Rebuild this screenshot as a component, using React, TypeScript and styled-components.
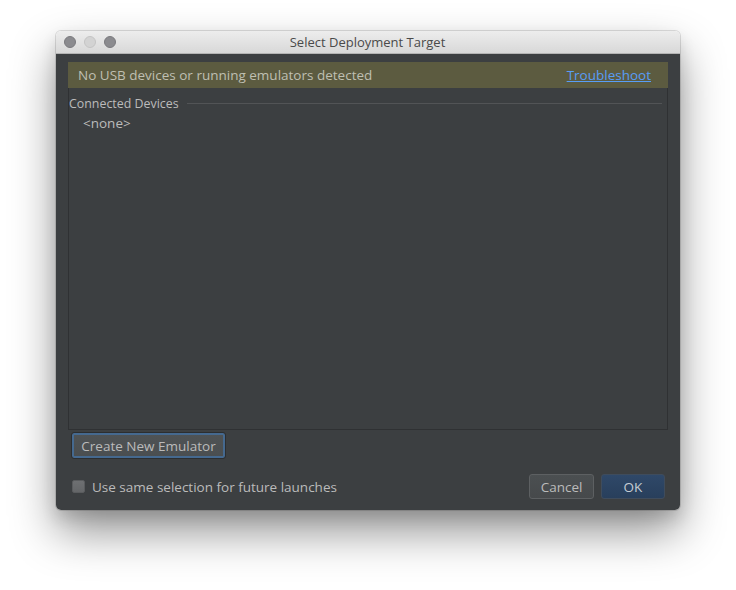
import React from 'react';
import styled, { createGlobalStyle } from 'styled-components';

const GlobalStyle = createGlobalStyle`
  html, body {
    margin: 0;
    padding: 0;
    background: #ffffff;
  }
  body {
    font-family: 'Open Sans', 'Liberation Sans', Arial, sans-serif;
    -webkit-font-smoothing: antialiased;
  }
`;

const Page = styled.div`
  width: 736px;
  height: 590px;
  padding: 31px 0 0 56px;
  box-sizing: border-box;
  overflow: hidden;
`;

const Window = styled.div`
  width: 624px;
  height: 479px;
  display: flex;
  flex-direction: column;
  border-radius: 5px;
  overflow: hidden;
  box-shadow: 0 0 0 1px rgba(0, 0, 0, 0.12), 0 22px 45px rgba(0, 0, 0, 0.42),
    0 8px 16px rgba(0, 0, 0, 0.12);
`;

const TitleBar = styled.div`
  position: relative;
  height: 23px;
  flex: none;
  display: flex;
  align-items: center;
  justify-content: center;
  background: linear-gradient(#ededed, #d8d8d8);
  border-bottom: 1px solid #b4b4b4;
  box-sizing: border-box;
`;

const Lights = styled.div`
  position: absolute;
  left: 8px;
  top: 5px;
  display: flex;
  gap: 8px;
`;

const Light = styled.span<{ $dim?: boolean }>`
  width: 12px;
  height: 12px;
  border-radius: 50%;
  box-sizing: border-box;
  background: ${(p) => (p.$dim ? '#d3d3d3' : '#8b8b8f')};
  border: 1px solid ${(p) => (p.$dim ? '#c4c4c4' : '#7a7a7e')};
`;

const Title = styled.div`
  font-size: 13px;
  color: #4a4a4a;
  margin-left: -1px;
`;

const Body = styled.div`
  flex: 1;
  display: flex;
  flex-direction: column;
  background: #3c3f41;
  padding: 8px 12px 11px 12px;
  color: #bbbbbb;
  font-size: 13.5px;
`;

const Banner = styled.div`
  height: 26px;
  flex: none;
  display: flex;
  align-items: center;
  justify-content: space-between;
  background: #5c5b40;
  padding: 0 17px 0 10px;
`;

const BannerText = styled.span`
  color: #bfbfb2;
`;

const Link = styled.a`
  color: #589df6;
  text-decoration: underline;
  cursor: pointer;
`;

const Panel = styled.div`
  flex: 1;
  border: 1px solid #2f3133;
  border-top: none;
  padding: 7px 5px 0 0;
  display: flex;
  flex-direction: column;
`;

const GroupHeader = styled.div`
  display: flex;
  align-items: center;
  gap: 8px;
  height: 17px;
  font-size: 12.4px;
  &::after {
    content: '';
    flex: 1;
    height: 1px;
    background: #525456;
  }
`;

const Item = styled.div`
  margin: 2px 0 0 14px;
`;

const CreateButton = styled.button`
  align-self: flex-start;
  margin: 2px 0 0 3px;
  height: 27px;
  width: 155px;
  font: inherit;
  color: #bbbbbb;
  background: linear-gradient(#4f5355, #4a4e50);
  border: 1px solid #2c2e30;
  border-radius: 3px;
  box-shadow: 0 0 0 2px #45698f inset;
  padding: 0;
`;

const Footer = styled.div`
  margin-top: 15px;
  display: flex;
  align-items: center;
  justify-content: space-between;
  height: 25px;
`;

const CheckLabel = styled.label`
  display: flex;
  align-items: center;
  gap: 7px;
  padding-left: 4px;
`;

const Box = styled.span`
  width: 13px;
  height: 13px;
  box-sizing: border-box;
  border-radius: 2px;
  background: linear-gradient(#6e7072, #646668);
  border: 1px solid #5a5c5e;
`;

const Buttons = styled.div`
  display: flex;
  gap: 7px;
  padding-right: 3px;
`;

const DialogButton = styled.button<{ $primary?: boolean }>`
  height: 25px;
  width: ${(p) => (p.$primary ? '64px' : '65px')};
  font: inherit;
  padding: 0;
  border-radius: 3px;
  color: ${(p) => (p.$primary ? '#c6ccd4' : '#bbbbbb')};
  background: ${(p) =>
    p.$primary
      ? 'linear-gradient(#2f4868, #283f5c)'
      : 'linear-gradient(#4b4f51, #46494b)'};
  border: 1px solid ${(p) => (p.$primary ? '#3f4c5c' : '#5d6062')};
`;

export default function App() {
  return (
    <Page>
      <GlobalStyle />
      <Window>
        <TitleBar>
          <Lights>
            <Light />
            <Light $dim />
            <Light />
          </Lights>
          <Title>Select Deployment Target</Title>
        </TitleBar>
        <Body>
          <Banner>
            <BannerText>No USB devices or running emulators detected</BannerText>
            <Link>Troubleshoot</Link>
          </Banner>
          <Panel>
            <GroupHeader>Connected Devices</GroupHeader>
            <Item>&lt;none&gt;</Item>
          </Panel>
          <CreateButton>Create New Emulator</CreateButton>
          <Footer>
            <CheckLabel>
              <Box />
              Use same selection for future launches
            </CheckLabel>
            <Buttons>
              <DialogButton>Cancel</DialogButton>
              <DialogButton $primary>OK</DialogButton>
            </Buttons>
          </Footer>
        </Body>
      </Window>
    </Page>
  );
}
